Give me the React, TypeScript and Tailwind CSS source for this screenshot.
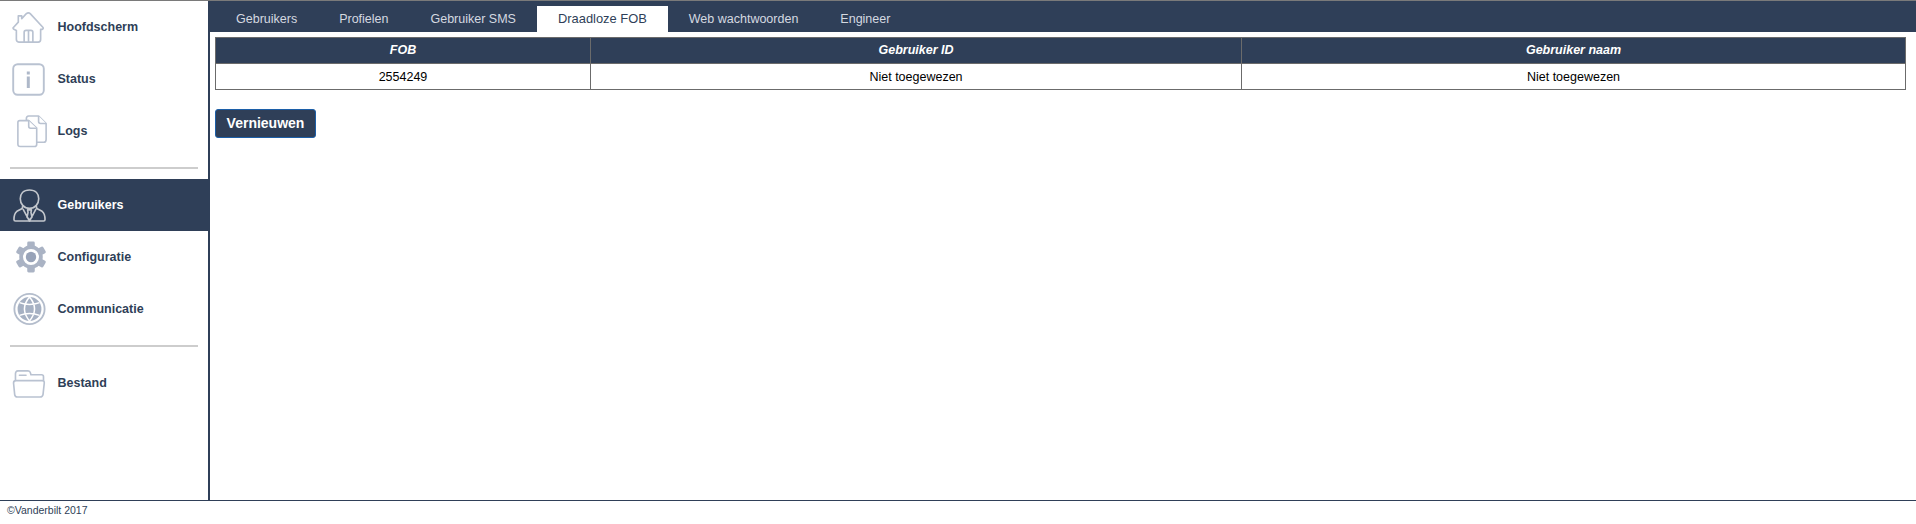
import React from 'react';

const iconStroke = '#b9c2d1';

const HomeIcon = () => (
  <svg className="ml-[12px]" width="33" height="33" viewBox="0 0 34 34" fill="none" stroke={iconStroke} strokeWidth="1.7" strokeLinejoin="round" strokeLinecap="round">
    <path d="M1 17.5 L6.5 11.5 V5 H10 V8 L14.5 3 Q17 1 19 3 L32 17 Q32.5 18.5 31 19 L29.5 19 V29 Q29.5 32 27 32 H7 Q4.5 32 4.5 29 V20 L1.5 18.5 Z" />
    <path d="M12.5 32 V22 Q12.5 20 14.5 20 H19.5 Q21.5 20 21.5 22 V32 M17 20.5 V32" />
  </svg>
);

const InfoIcon = () => (
  <svg className="ml-[12px]" width="33" height="33" viewBox="0 0 33 33" fill="none">
    <rect x="1.2" y="1.2" width="30.6" height="30.6" rx="4.5" stroke={iconStroke} strokeWidth="1.9" />
    <rect x="14.8" y="8.5" width="3" height="3" fill="#aeb8c9" />
    <rect x="14.8" y="13.5" width="3" height="11.5" fill="#aeb8c9" />
  </svg>
);

const FilesIcon = () => (
  <svg className="ml-[16px]" width="32" height="34" viewBox="0 0 34 36" fill="#fff" stroke={iconStroke} strokeWidth="1.7" strokeLinejoin="round">
    <path d="M11 5 Q11 2 13.5 2 H24 L32 10 V27 Q32 30 29.5 30 H20 V14 L13 7 H11 Z" />
    <path d="M24 2 V8 Q24 10 26 10 H32" />
    <path d="M4 7 H13.5 L22 15 V32 Q22 34.5 19.5 34.5 H4.5 Q2 34.5 2 32 V9 Q2 7 4 7 Z" />
    <path d="M13.5 7 V13 Q13.5 15 15.5 15 H22" />
  </svg>
);

const UserIcon = () => (
  <svg className="ml-[13px]" width="33" height="33" viewBox="0 0 34 34" fill="none" stroke="#c3c7cd" strokeWidth="1.7" strokeLinejoin="round" strokeLinecap="round">
    <path d="M17 1 C10.5 1 7.5 5 7.5 10 C7.5 15 11 20 17 20 C23 20 26.5 15 26.5 10 C26.5 5 23.5 1 17 1 Z" />
    <path d="M10 17.5 L9.5 20 L4 23 C2 24.5 1 28 1 31.5 Q1 33 2.5 33 H31.5 Q33 33 33 31.5 C33 28 32 24.5 30 23 L24.5 20 L24 17.5" />
    <path d="M10.5 21 L17 33 L23.5 21 M15 21.5 H19 L18.5 24 L19.5 29 L17 32 L14.5 29 L15.5 24 Z" />
  </svg>
);

const GearIcon = () => (
  <svg className="ml-[15px]" width="32" height="34" viewBox="0 0 34 36">
    <g fill="#aab3c4">
      <rect x="13" y="1.5" width="8" height="7" rx="1.5" />
      <rect x="13" y="27.5" width="8" height="7" rx="1.5" />
      <rect x="13" y="1.5" width="8" height="7" rx="1.5" transform="rotate(60 17 18)" />
      <rect x="13" y="1.5" width="8" height="7" rx="1.5" transform="rotate(120 17 18)" />
      <rect x="13" y="1.5" width="8" height="7" rx="1.5" transform="rotate(240 17 18)" />
      <rect x="13" y="1.5" width="8" height="7" rx="1.5" transform="rotate(300 17 18)" />
    </g>
    <circle cx="17" cy="18" r="10.5" fill="none" stroke="#aab3c4" strokeWidth="4" />
    <circle cx="17" cy="18" r="5.5" fill="#98a3b8" />
  </svg>
);

const GlobeIcon = () => (
  <svg className="ml-[13px]" width="33" height="34" viewBox="0 0 36 36" fill="none">
    <circle cx="18" cy="18" r="16.5" stroke="#b4bdcc" strokeWidth="2" />
    <circle cx="18" cy="18" r="13" fill="#a6b1c3" />
    <path d="M7 11 Q18 15 29 11 M7 25 Q18 21 29 25 M18 5 Q7 18 18 31 M18 5 Q29 18 18 31" stroke="#fff" strokeWidth="1.6" />
  </svg>
);

const FolderIcon = () => (
  <svg className="ml-[12px]" width="34" height="29" viewBox="0 0 34 30" fill="#fff" stroke={iconStroke} strokeWidth="1.7" strokeLinejoin="round" strokeLinecap="round">
    <path d="M3 27 V5 Q3 2 5.5 2 H16 Q18 2 18.5 4 L19 6 H30 Q32 6 32 8 V13" />
    <path d="M1 14.5 Q1 12 3.5 12 H30.5 Q33 12 32.8 14.5 L31.5 26.5 Q31 29 28.5 29 H5 Q2.5 29 2.2 26.5 Z" />
    <path d="M7 6.5 H14" strokeWidth="1.4" />
  </svg>
);

const SidebarItem = ({ icon, label, active }: { icon: React.ReactNode; label: string; active?: boolean }) => (
  <div className={`flex h-[52px] items-center ${active ? 'bg-[#2f3f58] text-white' : 'text-[#2f3f58]'}`}>
    <div className="flex w-[57.5px] shrink-0 items-center">{icon}</div>
    <span className="text-[12.5px] font-bold">{label}</span>
  </div>
);

const tabs = ['Gebruikers', 'Profielen', 'Gebruiker SMS', 'Draadloze FOB', 'Web wachtwoorden', 'Engineer'];

const cellBorder = 'border border-[#6b6b6b]';

export default function App() {
  return (
    <div className="flex h-[524px] flex-col overflow-hidden border-t border-[#7a7a7a] bg-white font-['Liberation_Sans',Arial,sans-serif]">
      <div className="flex h-[500px] shrink-0 border-b border-[#2f3f58]">
        <aside className="flex w-[210px] shrink-0 flex-col border-r-2 border-[#2f3f58]">
          <SidebarItem icon={<HomeIcon />} label="Hoofdscherm" />
          <SidebarItem icon={<InfoIcon />} label="Status" />
          <SidebarItem icon={<FilesIcon />} label="Logs" />
          <div className="mx-[10px] mt-[10px] mb-[10px] h-[2px] bg-[#cdcdcd]" />
          <SidebarItem icon={<UserIcon />} label="Gebruikers" active />
          <SidebarItem icon={<GearIcon />} label="Configuratie" />
          <SidebarItem icon={<GlobeIcon />} label="Communicatie" />
          <div className="mx-[10px] mt-[10px] mb-[10px] h-[2px] bg-[#cdcdcd]" />
          <SidebarItem icon={<FolderIcon />} label="Bestand" />
        </aside>
        <main className="min-w-0 flex-1">
          <nav className="flex h-[31px] items-end bg-[#2f3f58] pl-[5px] text-[12.5px]">
            {tabs.map((tab) => (
              <div
                key={tab}
                className={`flex h-[26px] items-center px-[21px] ${
                  tab === 'Draadloze FOB' ? 'bg-white text-[12.9px] text-[#2f3f58]' : 'text-[#d5d9e0]'
                }`}
              >
                {tab}
              </div>
            ))}
          </nav>
          <div className="pt-[5px] pr-[10px] pl-[5px]">
            <table className="w-full table-fixed border-collapse text-center text-[12.5px]">
              <thead>
                <tr className="h-[26px] bg-[#2f3f58] text-white">
                  <th className={`w-[375px] italic ${cellBorder}`}>FOB</th>
                  <th className={`w-[651px] italic ${cellBorder}`}>Gebruiker ID</th>
                  <th className={`italic ${cellBorder}`}>Gebruiker naam</th>
                </tr>
              </thead>
              <tbody>
                <tr className="h-[26px] text-black">
                  <td className={`pt-px ${cellBorder}`}>2554249</td>
                  <td className={`pt-px ${cellBorder}`}>Niet toegewezen</td>
                  <td className={`pt-px ${cellBorder}`}>Niet toegewezen</td>
                </tr>
              </tbody>
            </table>
            <button className="mt-[19px] block h-[29px] w-[101px] rounded-[3px] border border-[#1c5fa8] bg-[#2f3f58] text-[14px] font-bold text-white">
              Vernieuwen
            </button>
          </div>
        </main>
      </div>
      <footer className="flex flex-1 items-center pb-[3px] pl-[7px] text-[10.5px] text-[#2f3f58]">©Vanderbilt 2017</footer>
    </div>
  );
}
